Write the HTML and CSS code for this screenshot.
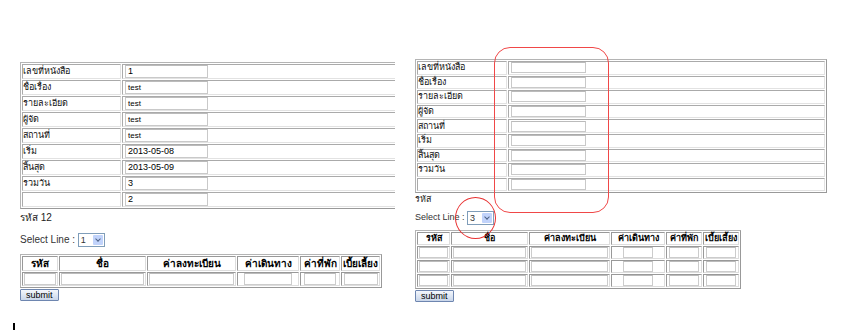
FILE: index.html
```html
<!DOCTYPE html>
<html lang="th">
<head>
  <meta charset="UTF-8">
  <title>ฟอร์มบันทึกการเดินทาง</title>
  <link rel="stylesheet" href="styles.css">
</head>
<body>
  <div class="shots">

    <!-- ภาพที่ 1 : ข้อมูลที่กรอกแล้ว -->
    <div class="shot shot-left">
      <table class="form-table">
        <tr><td class="label">เลขที่หนังสือ</td><td><span class="field">1</span></td></tr>
        <tr><td class="label">ชื่อเรื่อง</td><td><span class="field small">test</span></td></tr>
        <tr><td class="label">รายละเอียด</td><td><span class="field small">test</span></td></tr>
        <tr><td class="label">ผู้จัด</td><td><span class="field small">test</span></td></tr>
        <tr><td class="label">สถานที่</td><td><span class="field small">test</span></td></tr>
        <tr><td class="label">เริ่ม</td><td><span class="field">2013-05-08</span></td></tr>
        <tr><td class="label">สิ้นสุด</td><td><span class="field">2013-05-09</span></td></tr>
        <tr><td class="label">รวมวัน</td><td><span class="field">3</span></td></tr>
        <tr><td class="label"></td><td><span class="field">2</span></td></tr>
      </table>
      <div class="code-line">รหัส 12</div>
      <div class="select-line">Select Line : <span class="combo"><span class="combo-val">1</span><span class="combo-btn"></span></span></div>
      <table class="detail-table">
        <tr>
          <th class="c1">รหัส</th><th class="c2">ชื่อ</th><th class="c3">ค่าลงทะเบียน</th>
          <th class="c4">ค่าเดินทาง</th><th class="c5">ค่าที่พัก</th><th class="c6">เบี้ยเลี้ยง</th>
        </tr>
        <tr>
          <td><span class="box"></span></td><td><span class="box"></span></td><td><span class="box"></span></td>
          <td class="mid"><span class="box"></span></td><td class="mid"><span class="box"></span></td><td class="mid"><span class="box"></span></td>
        </tr>
      </table>
      <button class="submit">submit</button>
      <div class="cursor"></div>
    </div>

    <!-- ภาพที่ 2 : เลือก 3 บรรทัด -->
    <div class="shot shot-right">
      <table class="form-table">
        <tr><td class="label">เลขที่หนังสือ</td><td><span class="field"></span></td></tr>
        <tr><td class="label">ชื่อเรื่อง</td><td><span class="field"></span></td></tr>
        <tr><td class="label">รายละเอียด</td><td><span class="field"></span></td></tr>
        <tr><td class="label">ผู้จัด</td><td><span class="field"></span></td></tr>
        <tr><td class="label">สถานที่</td><td><span class="field"></span></td></tr>
        <tr><td class="label">เริ่ม</td><td><span class="field"></span></td></tr>
        <tr><td class="label">สิ้นสุด</td><td><span class="field"></span></td></tr>
        <tr><td class="label">รวมวัน</td><td><span class="field"></span></td></tr>
        <tr><td class="label"></td><td><span class="field"></span></td></tr>
      </table>
      <div class="code-line">รหัส</div>
      <div class="select-line">Select Line : <span class="combo"><span class="combo-val">3</span><span class="combo-btn"></span></span></div>
      <table class="detail-table">
        <tr>
          <th class="c1">รหัส</th><th class="c2">ชื่อ</th><th class="c3">ค่าลงทะเบียน</th>
          <th class="c4">ค่าเดินทาง</th><th class="c5">ค่าที่พัก</th><th class="c6">เบี้ยเลี้ยง</th>
        </tr>
        <tr>
          <td><span class="box"></span></td><td><span class="box"></span></td><td><span class="box"></span></td>
          <td class="mid"><span class="box"></span></td><td class="mid"><span class="box"></span></td><td class="mid"><span class="box"></span></td>
        </tr>
        <tr>
          <td><span class="box"></span></td><td><span class="box"></span></td><td><span class="box"></span></td>
          <td class="mid"><span class="box"></span></td><td class="mid"><span class="box"></span></td><td class="mid"><span class="box"></span></td>
        </tr>
        <tr>
          <td><span class="box"></span></td><td><span class="box"></span></td><td><span class="box"></span></td>
          <td class="mid"><span class="box"></span></td><td class="mid"><span class="box"></span></td><td class="mid"><span class="box"></span></td>
        </tr>
      </table>
      <button class="submit">submit</button>

      <!-- วงสีแดงที่ทำเครื่องหมายไว้ -->
      <div class="mark-rect"></div>
      <div class="mark-oval"></div>
    </div>

  </div>
</body>
</html>
```

FILE: styles.css
```css
body {
  margin: 0;
  background: #fff;
  font-family: Tahoma, "Liberation Sans", "Noto Sans", sans-serif;
  font-size: 10px;
  color: #000;
}

.shots {
  display: flex;
  width: 860px;
  height: 330px;
  overflow: hidden;
}

.shot {
  position: relative;
}

.shot-left {
  width: 395px;
  overflow: hidden;
  padding: 62px 0 0 20px;
  box-sizing: border-box;
}

.shot-right {
  flex: 1;
  padding: 59px 0 0 15px;
  margin-left: 5px;
}

/* ตารางหลัก */
.form-table {
  border-collapse: separate;
  border-spacing: 1px;
  border: 1px solid #b4b4b4;
  border-right-color: #999;
  border-bottom-color: #999;
}

.form-table td {
  border: 1px solid #aaa;
  border-right-color: #e2e2e2;
  border-bottom-color: #e2e2e2;
  padding: 0;
  height: 13px;
  line-height: 13px;
  white-space: nowrap;
}

.shot-left .form-table {
  width: 440px;
}

.shot-left .form-table .label {
  width: 97px;
}

.shot-right .form-table {
  width: 412px;
}

.shot-right .form-table td {
  height: 11.6px;
  line-height: 11px;
}

.shot-right .form-table .label {
  width: 88px;
}

.label {
  font-size: 9px;
  color: #111;
}

.field {
  display: block;
  width: 79px;
  height: 11px;
  margin: 0 0 0 2px;
  border: 1px solid #c9c9c9;
  border-top-color: #bbb;
  font-size: 9px;
  line-height: 11px;
  padding-left: 2px;
}

.field.small {
  font-size: 8px;
}

.shot-right .field {
  width: 71px;
  height: 9px;
}

.code-line {
  height: 13px;
  line-height: 13px;
  margin-top: 2px;
  color: #222;
}

.shot-right .code-line {
  font-size: 9px;
  margin-top: 0;
}

.select-line {
  margin-top: 9px;
  height: 14px;
  line-height: 14px;
  color: #333;
}

.shot-right .select-line {
  margin-top: 4px;
  font-size: 9px;
}

.combo {
  display: inline-flex;
  vertical-align: middle;
  height: 12px;
  border: 1px solid #7f9db9;
  background: #fff;
}

.combo-val {
  width: 11px;
  font-size: 9px;
  line-height: 12px;
  padding-left: 2px;
}

.combo-btn {
  width: 10px;
  height: 10px;
  margin: 1px;
  background: #c1d3fb;
  border-radius: 1px;
  position: relative;
}

.combo-btn::after {
  content: "";
  position: absolute;
  left: 3px;
  top: 2px;
  width: 3px;
  height: 3px;
  border-right: 1px solid #4d6185;
  border-bottom: 1px solid #4d6185;
  transform: rotate(45deg);
}

/* ตารางรายละเอียด */
.detail-table {
  margin-top: 7px;
  border-collapse: separate;
  border-spacing: 1px;
  border: 1px solid #b4b4b4;
  border-right-color: #999;
  border-bottom-color: #999;
}

.detail-table th,
.detail-table td {
  border: 1px solid #999;
  border-right-color: #ddd;
  border-bottom-color: #ddd;
  padding: 0;
}

.detail-table th {
  height: 13px;
  font-size: 10px;
  font-weight: bold;
  line-height: 13px;
  white-space: nowrap;
}

.detail-table td {
  height: 12px;
  padding: 0 1px;
}

.detail-table .box {
  display: block;
  height: 10px;
  border: 1px solid #ccc;
  border-top-color: #bbb;
}

.detail-table .mid .box {
  margin: 0 auto;
}

.shot-left .c1 { width: 34px; }
.shot-left .c2 { width: 85px; }
.shot-left .c3 { width: 87px; }
.shot-left .c4 { width: 60px; }
.shot-left .c5 { width: 38px; }
.shot-left .c6 { width: 37px; }

.shot-left .detail-table .mid:nth-child(4) .box { width: 46px; }
.shot-left .detail-table .mid:nth-child(5) .box { width: 30px; }
.shot-left .detail-table .mid:nth-child(6) .box { width: 32px; }

.shot-right .detail-table { margin-top: 6px; }
.shot-right .detail-table th { font-size: 9px; height: 11px; line-height: 11px; }
.shot-right .detail-table td { height: 11px; }
.shot-right .detail-table .box { height: 9px; }
.shot-right .c1 { width: 31px; }
.shot-right .c2 { width: 75px; }
.shot-right .c3 { width: 79px; }
.shot-right .c4 { width: 52px; }
.shot-right .c5 { width: 34px; }
.shot-right .c6 { width: 34px; }

.shot-right .detail-table .mid:nth-child(4) .box { width: 28px; }
.shot-right .detail-table .mid:nth-child(5) .box { width: 28px; }
.shot-right .detail-table .mid:nth-child(6) .box { width: 28px; }

.submit {
  display: block;
  margin-top: 1px;
  height: 12px;
  padding: 0 5px;
  font-family: inherit;
  font-size: 9px;
  line-height: 10px;
  color: #000;
  background: linear-gradient(#f4f7fc, #c9d6ea);
  border: 1px solid #6e86b0;
  border-radius: 1px;
}

.cursor {
  width: 2px;
  height: 7px;
  background: #000;
  margin: 22px 0 0 -7px;
}

/* เครื่องหมายสีแดง */
.mark-rect {
  position: absolute;
  left: 94px;
  top: 47px;
  width: 113px;
  height: 164px;
  border: 1px solid #f04848;
  border-radius: 16px;
}

.mark-oval {
  position: absolute;
  left: 55px;
  top: 197px;
  width: 39px;
  height: 40px;
  border: 1px solid #e83030;
  border-radius: 50%;
}
```
